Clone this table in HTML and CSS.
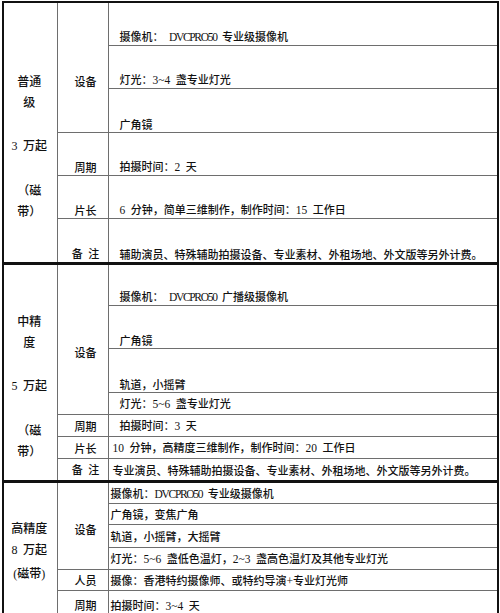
FILE: index.html
```html
<!DOCTYPE html>
<html lang="zh-CN">
<head>
<meta charset="utf-8">
<title>拍摄报价</title>
<link rel="stylesheet" href="styles.css">
</head>
<body>
<table class="quote">
  <colgroup><col class="col-tier"><col class="col-label"><col class="col-item"></colgroup>
  <tbody class="tier tier-basic">
    <tr class="h43">
      <th rowspan="6" class="tier-name">普通<br>级<br><br><span class="lat">3 </span>万起<br><br>（磁<br>带）</th>
      <td rowspan="3" class="label label-equip">设备</td>
      <td class="item">摄像机：<span class="lat caps">  DVCPRO50 </span>专业级摄像机</td>
    </tr>
    <tr class="h43"><td class="item">灯光：<span class="lat">3~4 </span>盏专业灯光</td></tr>
    <tr class="h44"><td class="item">广角镜</td></tr>
    <tr class="h43"><td class="label">周期</td><td class="item">拍摄时间：<span class="lat">2 </span>天</td></tr>
    <tr class="h43"><td class="label">片长</td><td class="item"><span class="lat">6 </span>分钟，简单三维制作，制作时间：<span class="lat">15 </span>工作日</td></tr>
    <tr class="h45"><td class="label">备<span class="lat"> </span>注</td><td class="item">辅助演员、特殊辅助拍摄设备、专业素材、外租场地、外文版等另外计费。</td></tr>
  </tbody>
  <tbody class="tier tier-mid">
    <tr class="h42">
      <th rowspan="7" class="tier-name">中精<br>度<br><br><span class="lat">5 </span>万起<br><br>（磁<br>带）</th>
      <td rowspan="4" class="label label-equip">设备</td>
      <td class="item">摄像机：<span class="lat caps">  DVCPRO50 </span>广播级摄像机</td>
    </tr>
    <tr class="h43"><td class="item">广角镜</td></tr>
    <tr class="h44"><td class="item">轨道，小摇臂</td></tr>
    <tr class="h22"><td class="item compact">灯光：<span class="lat">5~6 </span>盏专业灯光</td></tr>
    <tr class="h22"><td class="label compact">周期</td><td class="item compact">拍摄时间：<span class="lat">3 </span>天</td></tr>
    <tr class="h22"><td class="label compact">片长</td><td class="item compact tight"><span class="lat">10 </span>分钟，高精度三维制作，制作时间：<span class="lat">20 </span>工作日</td></tr>
    <tr class="h23"><td class="label compact">备<span class="lat"> </span>注</td><td class="item compact tight">专业演员、特殊辅助拍摄设备、专业素材、外租场地、外文版等另外计费。</td></tr>
  </tbody>
  <tbody class="tier tier-high">
    <tr class="h22">
      <th rowspan="6" class="tier-name">高精度<br><span class="lat">8 </span>万起<br><span class="lat">(</span>磁带<span class="lat">)</span></th>
      <td rowspan="4" class="label label-equip">设备</td>
      <td class="item">摄像机：<span class="lat caps">DVCPRO50 </span>专业级摄像机</td>
    </tr>
    <tr class="h21"><td class="item">广角镜，变焦广角</td></tr>
    <tr class="h23"><td class="item">轨道，小摇臂，大摇臂</td></tr>
    <tr class="h22"><td class="item">灯光：<span class="lat">5~6 </span>盏低色温灯，<span class="lat">2~3 </span>盏高色温灯及其他专业灯光</td></tr>
    <tr class="h21"><td class="label">人员</td><td class="item">摄像：香港特约摄像师、或特约导演<span class="lat">+</span>专业灯光师</td></tr>
    <tr class="h30"><td class="label">周期</td><td class="item">拍摄时间：<span class="lat">3~4 </span>天</td></tr>
  </tbody>
</table>
</body>
</html>
```

FILE: styles.css
```css
html, body {
  margin: 0;
  padding: 0;
  background: #ffffff;
}

body {
  padding: 1px 0 0 2px;
  font-family: "Noto Sans CJK SC", "Liberation Serif", sans-serif;
  color: #111111;
}

.quote {
  border-collapse: collapse;
  table-layout: fixed;
  width: 495px;
  border: 2px solid #111111;
  font-size: 11px;
  font-weight: 500;
}

.col-tier { width: 54px; }
.col-label { width: 51px; }
.col-item { width: 390px; }

.quote td,
.quote th {
  border: 1px solid #6e6e6e;
  padding: 0;
  line-height: 12px;
  white-space: nowrap;
  overflow: hidden;
}

.quote .tier + .tier {
  border-top: 3px solid #111111;
}

.quote .h21 { height: 21px; }
.quote .h22 { height: 22px; }
.quote .h23 { height: 23px; }
.quote .h30 { height: 30px; }
.quote .h42 { height: 42px; }
.quote .h43 { height: 43px; }
.quote .h44 { height: 44px; }
.quote .h45 { height: 45px; }

.quote .lat {
  font-family: "Liberation Serif", serif;
  font-weight: normal;
  font-size: 11.5px;
  word-spacing: 2.6px;
}

.quote .lat.caps {
  letter-spacing: -1.3px;
  word-spacing: 3.8px;
}

.quote .tier-name {
  font-weight: 500;
  font-size: 12px;
  line-height: 21.4px;
  text-align: center;
  vertical-align: top;
  padding: 0 2px 0 0;
}

.quote .tier-name .lat {
  font-size: 12px;
}

.tier-basic .tier-name { padding-top: 67px; }
.tier-mid .tier-name { padding-top: 45px; }
.tier-high .tier-name { padding-top: 34px; line-height: 21.5px; }

.quote .label {
  text-align: center;
  vertical-align: bottom;
  padding: 0 0 2px 6px;
}

.quote .label-equip { vertical-align: top; }
.tier-basic .label-equip { padding-top: 72px; }
.tier-mid .label-equip { padding-top: 81px; }

.quote .item {
  vertical-align: bottom;
  padding: 0 4px 2px 11px;
}

.quote .item.compact,
.quote .label.compact {
  padding-bottom: 4px;
}

.quote .item.tight {
  padding-left: 4px;
}

.tier-high .item {
  vertical-align: middle;
  padding: 1px 4px 0 2px;
}

.tier-high .label {
  vertical-align: middle;
  padding-top: 1px;
  padding-bottom: 0;
}

.tier-high .label-equip {
  vertical-align: top;
  padding-top: 40px;
}
```
